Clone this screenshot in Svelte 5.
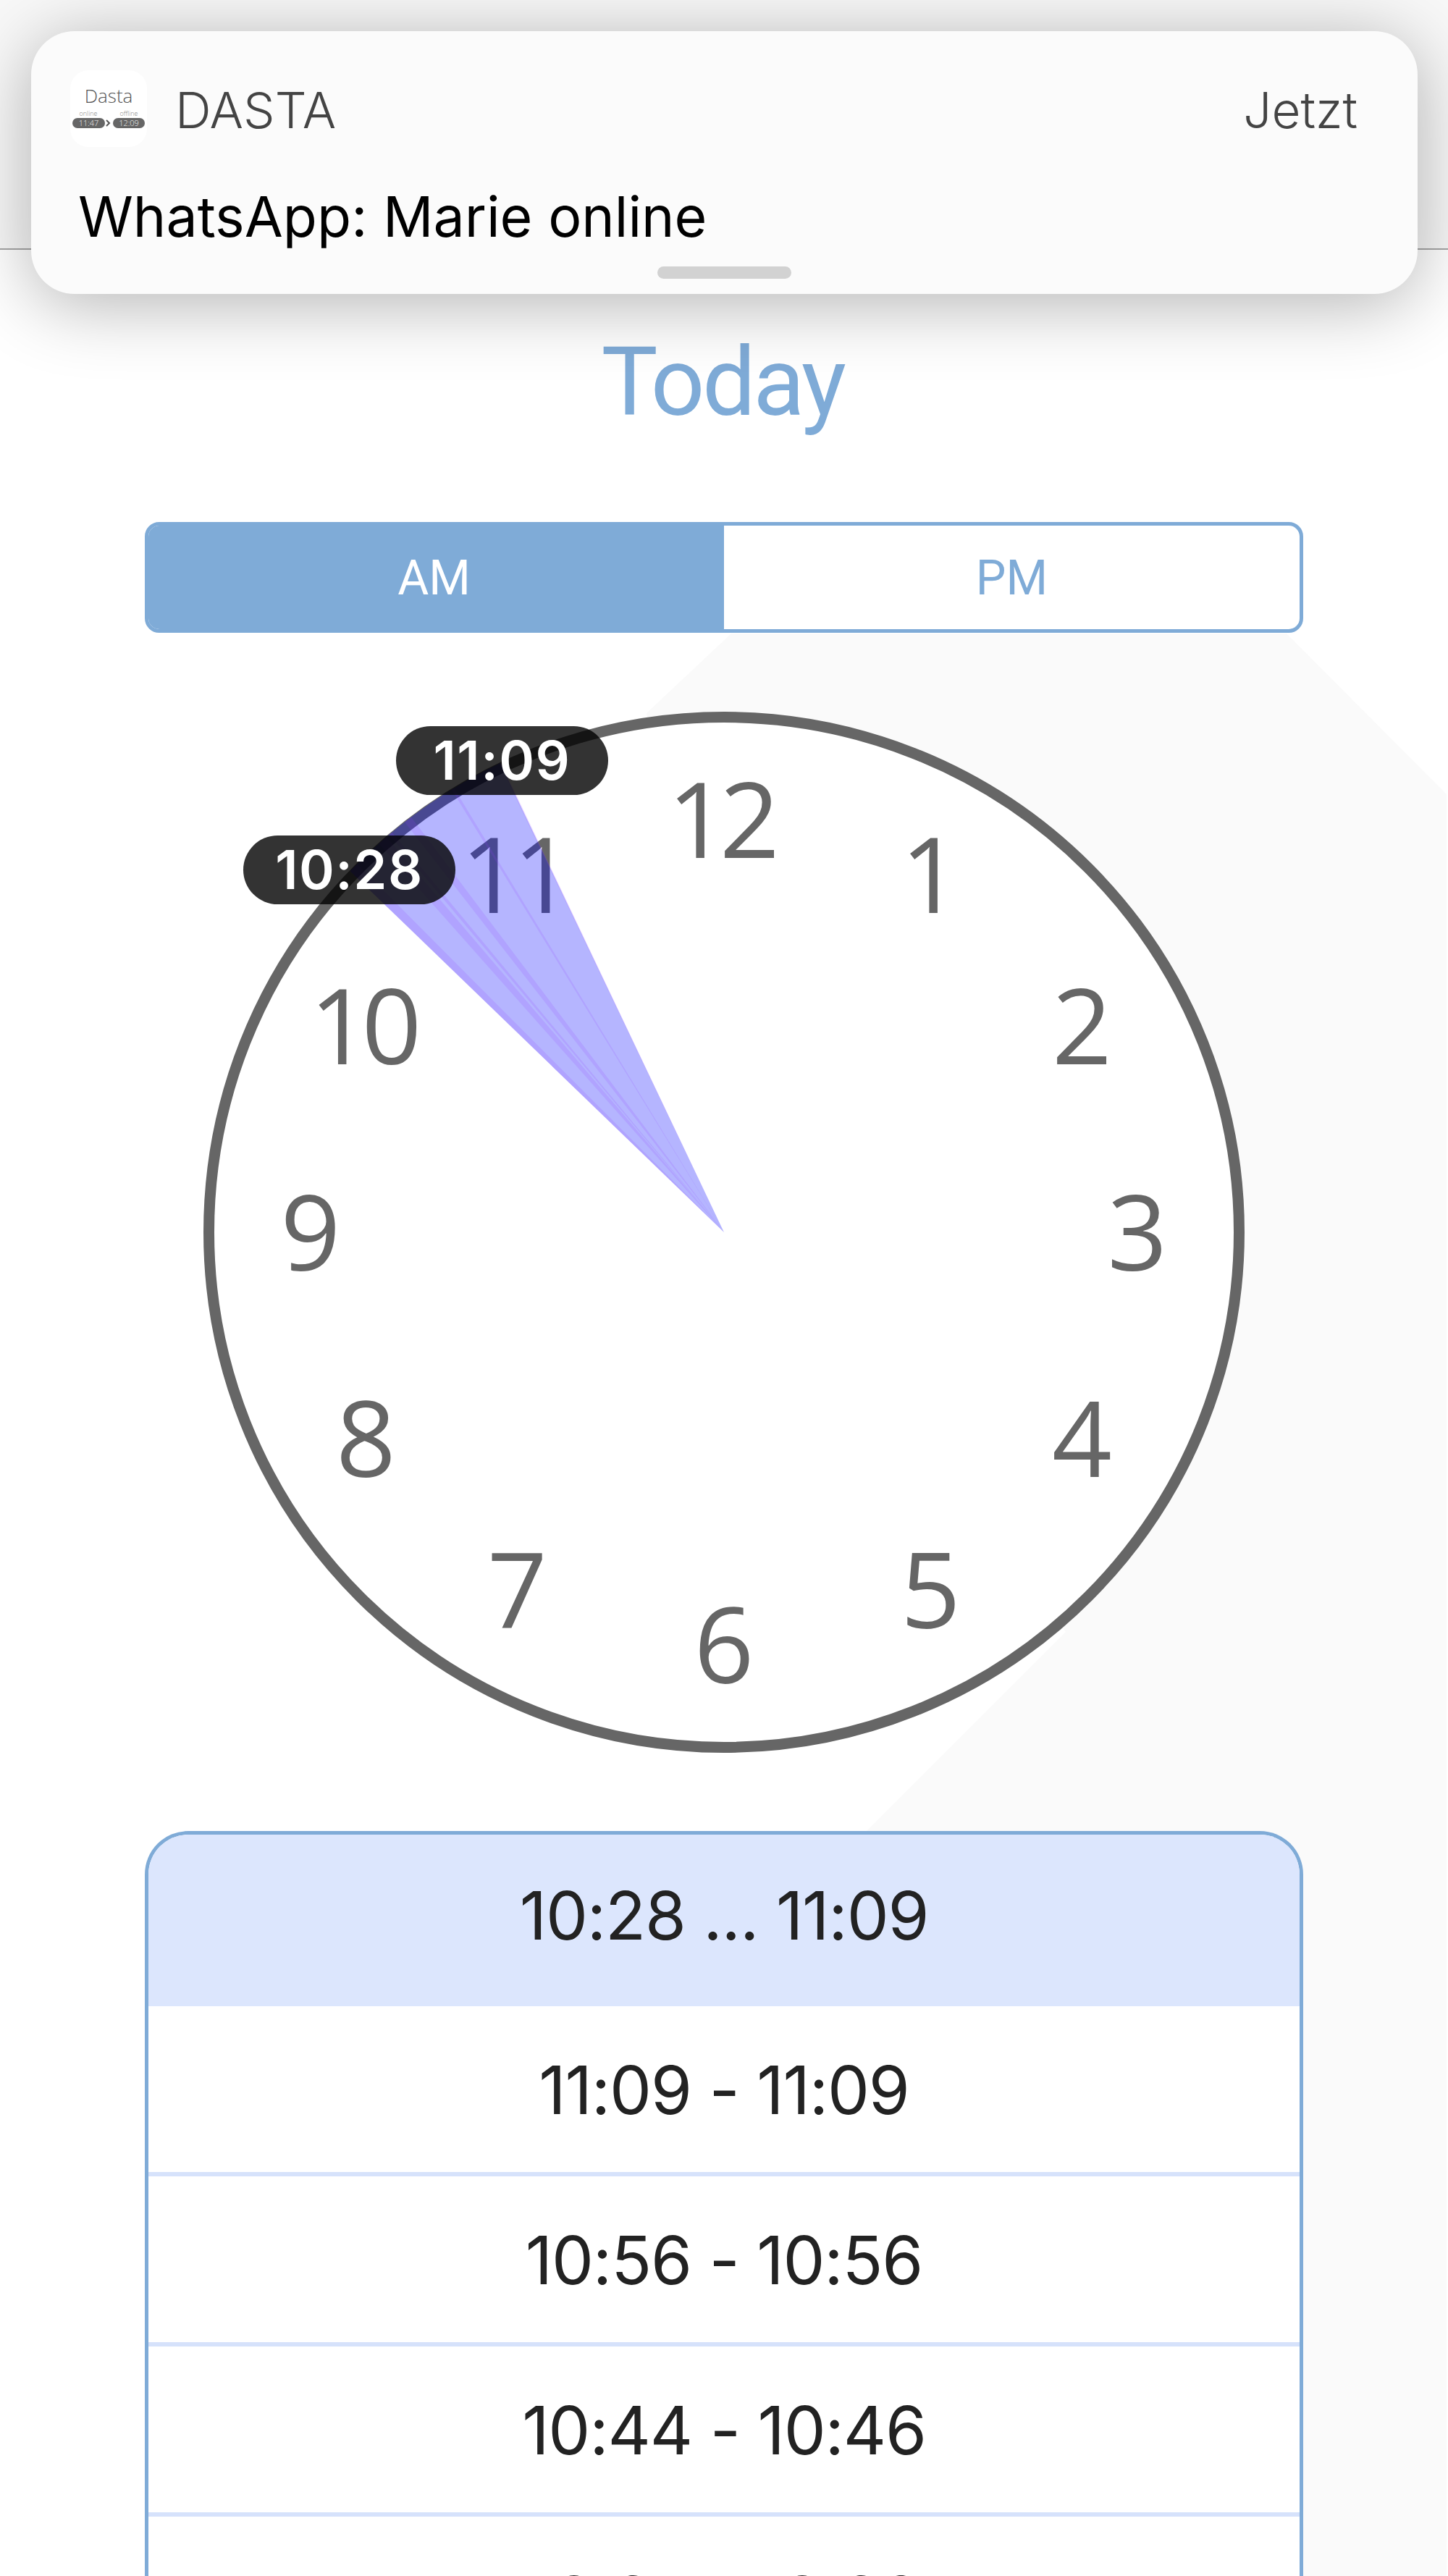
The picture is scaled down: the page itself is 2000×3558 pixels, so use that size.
<script>
    const hours = [12, 1, 2, 3, 4, 5, 6, 7, 8, 9, 10, 11];
    const center = 720;

    // hour position on the 12h dial, in degrees
    const toAngle = (h, m) => ((h % 12) * 60 + m) / 2;

    function sector(from, to, r = 718) {
        const point = (deg) => {
            const a = (deg * Math.PI) / 180;
            return `${center + r * Math.sin(a)} ${center - r * Math.cos(a)}`;
        };
        return `M${center} ${center}L${point(from)}A${r} ${r} 0 0 1 ${point(to)}Z`;
    }

    const main = sector(toAngle(10, 28), toAngle(11, 9));
    const stripes = [
        [314, 315.1],
        [318.4, 319.5],
        [319.9, 320.3],
        [322.1, 323],
        [328.4, 328.7],
        [334.4, 334.6]
    ].map(([a, b]) => sector(a, b));

    const numbers = hours.map((n, i) => {
        const a = (i * 30 * Math.PI) / 180;
        // two-digit labels are set tighter, so they sit a little to the left
        const nudge = n > 9 ? -6 : 0;
        return { n, x: center + 571 * Math.sin(a) + nudge, y: center - 570 * Math.cos(a) + 53 };
    });

    const rows = ['10:28 ... 11:09', '11:09 - 11:09', '10:56 - 10:56', '10:44 - 10:46', '10:37 - 10:39'];
</script>

<div class="page">
    <svg class="backdrop" width="2000" height="3558" viewBox="0 0 2000 3558" aria-hidden="true">
        <polygon points="1010,875 1777,875 1998,1097 1998,3558 1000,3558 1000,2726 1472,2254 1000,1700 893,985" />
    </svg>

    <header class="topbar"></header>

    <h1 class="title">Today</h1>

    <div class="segment">
        <div class="seg active">AM</div>
        <div class="seg">PM</div>
    </div>

    <div class="clock">
        <svg width="1440" height="1440" viewBox="0 0 1440 1440">
            <circle cx={center} cy={center} r="711.5" class="face" />
            {#each numbers as num}
                <text x={num.x} y={num.y} text-anchor="middle" class="num" class:wide={num.n > 9}>{num.n}</text>
            {/each}
            <path d={main} class="wedge" />
            {#each stripes as d}
                <path {d} class="stripe" />
            {/each}
        </svg>
        <div class="pill pill-end">11:09</div>
        <div class="pill pill-start">10:28</div>
    </div>

    <div class="list">
        {#each rows as row, i}
            <div class="row" class:selected={i === 0}>{row}</div>
        {/each}
    </div>

    <div class="notice">
        <div class="notice-head">
            <svg class="app-icon" width="106" height="106" viewBox="0 0 106 106">
                <rect width="106" height="106" rx="25" fill="#fff" />
                <text x="53" y="45" text-anchor="middle" class="icon-name">Dasta</text>
                <text x="25" y="63" text-anchor="middle" class="icon-small">online</text>
                <text x="81" y="63" text-anchor="middle" class="icon-small">offline</text>
                <rect x="3" y="66" width="45" height="14" rx="7" fill="#666" />
                <rect x="59" y="66" width="44" height="14" rx="7" fill="#666" />
                <text x="25.5" y="77" text-anchor="middle" class="icon-time">11:47</text>
                <text x="81" y="77" text-anchor="middle" class="icon-time">12:09</text>
                <path d="M50 69l4 4-4 4" fill="none" stroke="#555" stroke-width="2" />
            </svg>
            <span class="app-name">DASTA</span>
            <span class="when">Jetzt</span>
        </div>
        <div class="message">WhatsApp: Marie online</div>
        <div class="grabber"></div>
    </div>
</div>

<style>
    :global(body) {
        margin: 0;
        background: #fff;
    }
    .page {
        position: relative;
        width: 2000px;
        height: 3558px;
        overflow: hidden;
        background: #fff;
        font-family: Roboto, "Liberation Sans", sans-serif;
    }
    .backdrop {
        position: absolute;
        top: 0;
        left: 0;
    }
    .backdrop polygon {
        fill: #fafafa;
    }
    .topbar {
        position: relative;
        height: 343px;
        background: #f8f8f8;
        border-bottom: 2px solid #a6a6a6;
    }
    .title {
        position: relative;
        box-sizing: border-box;
        margin: 0;
        height: 376px;
        padding-right: 4px;
        font-size: 131px;
        line-height: 366px;
        font-weight: 380;
        letter-spacing: -3.5px;
        text-align: center;
        color: #7fabd7;
    }
    .segment {
        position: relative;
        display: flex;
        box-sizing: border-box;
        width: 1600px;
        height: 153px;
        margin: 0 auto;
        border: 5px solid #7fabd7;
        border-radius: 20px;
        overflow: hidden;
        background: #fff;
    }
    .seg {
        flex: none;
        width: 50%;
        box-sizing: border-box;
        display: flex;
        align-items: center;
        justify-content: center;
        padding-top: 2px;
        font-size: 66px;
        font-weight: 400;
        color: #7fabd7;
    }
    .seg.active {
        padding-right: 6px;
        background: #7fabd7;
        color: #fff;
    }
    .clock {
        position: relative;
        width: 1440px;
        height: 1440px;
        margin: 108px auto 0;
    }
    .clock svg {
        display: block;
    }
    .face {
        fill: #fff;
        stroke: #666;
        stroke-width: 15;
    }
    .num {
        font-family: "Open Sans", "Noto Sans", sans-serif;
        font-size: 145px;
        fill: #666;
    }
    .num.wide {
        letter-spacing: -11px;
    }
    .wedge {
        fill: rgba(0, 0, 255, 0.29);
    }
    .stripe {
        fill: rgba(150, 60, 255, 0.15);
    }
    .pill {
        position: absolute;
        width: 293px;
        height: 95px;
        border-radius: 48px;
        background: rgba(0, 0, 0, 0.8);
        color: #fff;
        font-family: Inter, Roboto, sans-serif;
        font-size: 74px;
        font-weight: 600;
        letter-spacing: 1.5px;
        line-height: 95px;
        text-align: center;
    }
    .pill-end {
        left: 267px;
        top: 21px;
    }
    .pill-start {
        left: 56px;
        top: 172px;
    }
    .list {
        position: relative;
        box-sizing: border-box;
        width: 1600px;
        margin: 107px auto 0;
        border: 5px solid #7fabd7;
        border-bottom: 0;
        border-radius: 60px 60px 0 0;
        background: #fff;
        overflow: hidden;
    }
    .row {
        box-sizing: border-box;
        display: flex;
        align-items: center;
        justify-content: center;
        height: 235px;
        padding-top: 2px;
        border-bottom: 6px solid #d6e2fb;
        font-family: Inter, Roboto, sans-serif;
        font-size: 92px;
        letter-spacing: -1.2px;
        color: #222;
    }
    .row.selected {
        height: 237px;
        padding-top: 0;
        padding-bottom: 14px;
        border-bottom: 0;
        background: #dce6fd;
    }
    .notice {
        position: absolute;
        top: 43px;
        left: 43px;
        box-sizing: border-box;
        width: 1915px;
        height: 363px;
        padding: 54px 83px 0 54px;
        border-radius: 60px;
        background: #fbfbfb;
        box-shadow: 0 14px 100px rgba(0, 0, 0, 0.3);
        font-family: Inter, Roboto, sans-serif;
    }
    .notice-head {
        display: flex;
        align-items: center;
        font-size: 69px;
        font-weight: 300;
        color: #444;
    }
    .notice-head span {
        padding-top: 4px;
    }
    .app-icon {
        margin-right: 39px;
    }
    .icon-name {
        font-family: "Open Sans", sans-serif;
        font-size: 26px;
        fill: #555;
    }
    .icon-small {
        font-family: "Open Sans", sans-serif;
        font-size: 9px;
        fill: #888;
    }
    .icon-time {
        font-family: "Open Sans", sans-serif;
        font-size: 11px;
        fill: #eee;
    }
    .when {
        margin-left: auto;
    }
    .message {
        margin-top: 46px;
        margin-left: 11px;
        font-size: 77px;
        line-height: 100px;
        color: #000;
    }
    .grabber {
        position: absolute;
        left: 865px;
        bottom: 21px;
        width: 185px;
        height: 17px;
        border-radius: 9px;
        background: #d2d2d2;
    }
</style>
